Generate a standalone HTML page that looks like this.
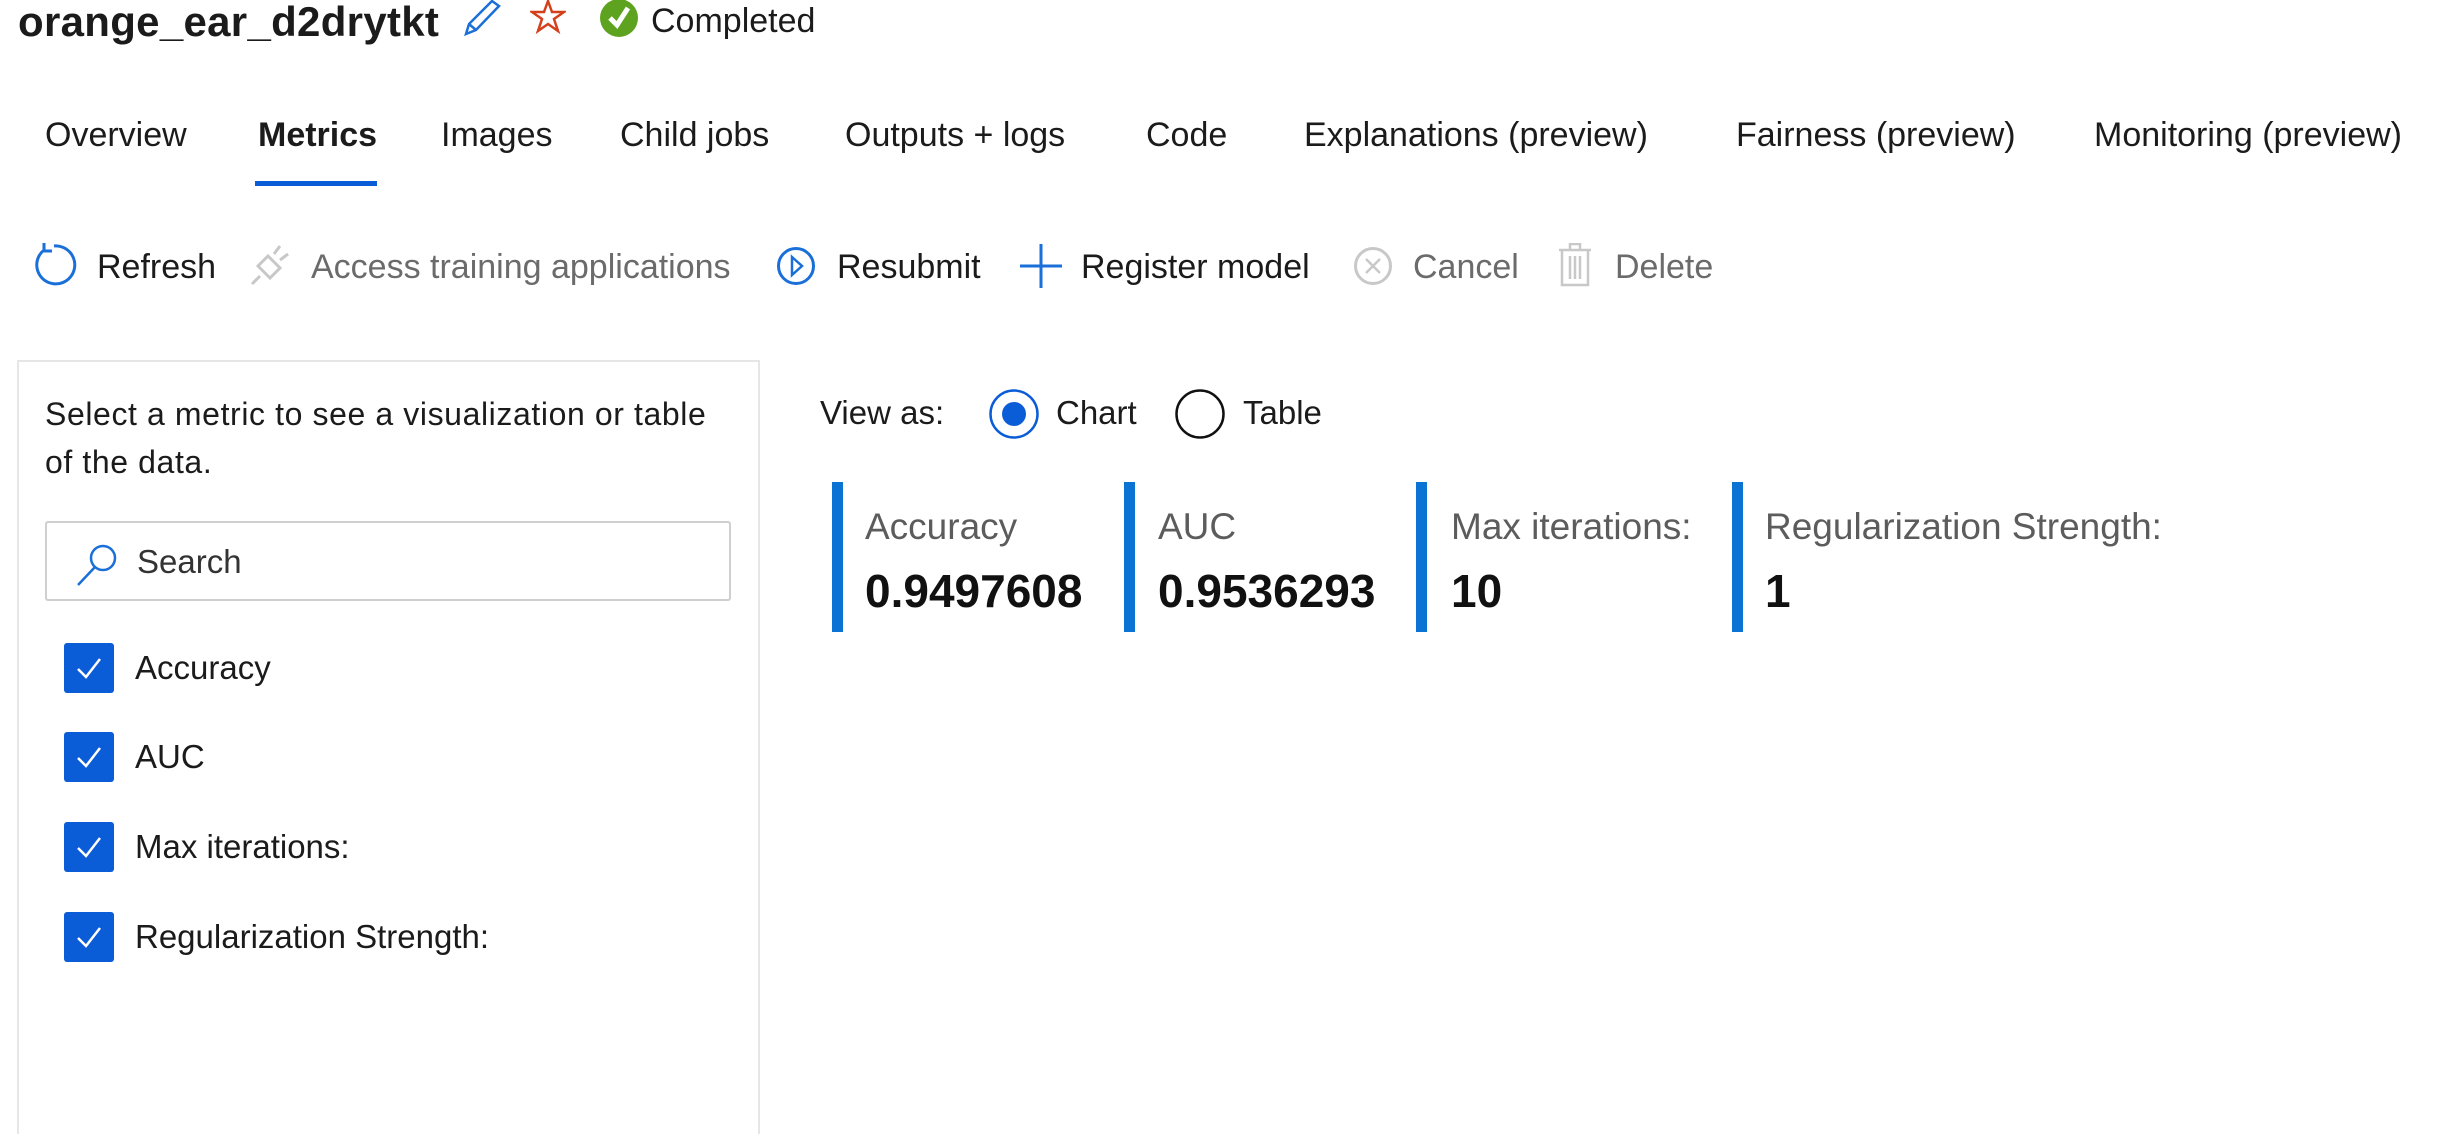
<!DOCTYPE html>
<html style="overflow:hidden"><head><meta charset="utf-8"><style>
*{margin:0;padding:0;box-sizing:border-box}
html,body{width:2454px;height:1134px;overflow:hidden;background:#fff}
#w{position:relative;width:2454px;height:1134px;overflow:hidden;font-family:"Liberation Sans",sans-serif;color:#1b1b1b}
.a{position:absolute;white-space:nowrap}
.t{font-size:34px;height:50px;line-height:50px}
.g{color:#6b6b6b}
.cb{position:absolute;left:64px;width:50px;height:50px;background:#0b5cd7;border-radius:3px}
.cl{position:absolute;left:135px;font-size:33px;height:50px;line-height:50px}
.bar{position:absolute;top:482px;width:11px;height:150px;background:#0a73d4}
.ml{position:absolute;top:505px;font-size:37px;color:#5c5c5c;line-height:44px}
.mv{position:absolute;top:565px;font-size:46px;font-weight:bold;color:#111;line-height:52px}
</style></head><body><div id="w">
<div class="a" style="left:18px;top:-3px;font-size:42px;font-weight:bold;line-height:50px;letter-spacing:0.3px">orange_ear_d2drytkt</div>
<svg class="a" style="left:460px;top:0" width="44" height="36" viewBox="0 0 44 36"><path d="M6 34 L9 24 L32 1 L39 6 L16 30 Z M9 24 L16 30" fill="none" stroke="#1a6fd8" stroke-width="2.5"/></svg>
<svg class="a" style="left:530px;top:0" width="36" height="34" viewBox="0 0 36 34"><path d="M18 1 L22 12 L34 12 L24 19 L28 31 L18 24 L8 31 L12 19 L2 12 L14 12 Z" fill="none" stroke="#d4401c" stroke-width="2.5"/></svg>
<svg class="a" style="left:599px;top:0" width="40" height="38" viewBox="0 0 40 38"><circle cx="20" cy="18" r="19" fill="#5ea320"/><path d="M11 18 L18 25 L29 8" fill="none" stroke="#fff" stroke-width="5"/></svg>
<div class="a" style="left:651px;top:-4px;font-size:34px;line-height:50px">Completed</div>

<div class="a t" style="left:45px;top:110px">Overview</div>
<div class="a t" style="left:258px;top:110px;font-weight:bold">Metrics</div>
<div class="a t" style="left:441px;top:110px">Images</div>
<div class="a t" style="left:620px;top:110px">Child jobs</div>
<div class="a t" style="left:845px;top:110px">Outputs + logs</div>
<div class="a t" style="left:1146px;top:110px">Code</div>
<div class="a t" style="left:1304px;top:110px">Explanations (preview)</div>
<div class="a t" style="left:1736px;top:110px">Fairness (preview)</div>
<div class="a t" style="left:2094px;top:110px">Monitoring (preview)</div>
<div class="a" style="left:255px;top:181px;width:122px;height:5px;background:#0b5cd7"></div>

<svg class="a" style="left:34px;top:242px" width="44" height="46" viewBox="0 0 44 46"><path d="M10 8 A19 19 0 1 0 20 4" fill="none" stroke="#1a6fd8" stroke-width="3"/><path d="M10 1 L10 9 L18 9" fill="none" stroke="#1a6fd8" stroke-width="3"/></svg>
<div class="a t" style="left:97px;top:242px">Refresh</div>
<svg class="a" style="left:250px;top:244px" width="40" height="42" viewBox="0 0 40 42"><path d="M2 40 L10 32 M30 2 L24 10 M38 10 L30 16 M8 22 L20 34 L30 24 L18 12 Z" fill="none" stroke="#c8c8c8" stroke-width="3"/></svg>
<div class="a t g" style="left:311px;top:242px">Access training applications</div>
<svg class="a" style="left:776px;top:246px" width="40" height="40" viewBox="0 0 40 40"><circle cx="20" cy="20" r="17.5" fill="none" stroke="#1a6fd8" stroke-width="3"/><path d="M16 11 L26 20 L16 29 Z" fill="none" stroke="#1a6fd8" stroke-width="2.5"/></svg>
<div class="a t" style="left:837px;top:242px">Resubmit</div>
<svg class="a" style="left:1020px;top:244px" width="42" height="44" viewBox="0 0 42 44"><path d="M21 0 V44 M0 22 H42" stroke="#1a6fd8" stroke-width="3"/></svg>
<div class="a t" style="left:1081px;top:242px">Register model</div>
<svg class="a" style="left:1353px;top:246px" width="40" height="40" viewBox="0 0 40 40"><circle cx="20" cy="20" r="17.5" fill="none" stroke="#c8c8c8" stroke-width="3"/><path d="M13 13 L27 27 M27 13 L13 27" stroke="#c8c8c8" stroke-width="2.5"/></svg>
<div class="a t g" style="left:1413px;top:242px">Cancel</div>
<svg class="a" style="left:1558px;top:243px" width="34" height="44" viewBox="0 0 34 44"><path d="M1 7 H33 M12 7 V1 H22 V7 M4 7 V42 H30 V7 M12 13 V36 M17 13 V36 M22 13 V36" fill="none" stroke="#c8c8c8" stroke-width="2.5"/></svg>
<div class="a t g" style="left:1615px;top:242px">Delete</div>

<div class="a" style="left:17px;top:360px;width:743px;height:774px;border:2px solid #e6e6e6;border-bottom:none"></div>
<div class="a" style="left:45px;top:390px;font-size:32px;line-height:48px;letter-spacing:0.6px">Select a metric to see a visualization or table<br>of the data.</div>
<div class="a" style="left:45px;top:521px;width:686px;height:80px;border:2px solid #cfcfcf;border-radius:3px"></div>
<svg class="a" style="left:75px;top:541px" width="46" height="46" viewBox="0 0 46 46"><circle cx="28" cy="17" r="12" fill="none" stroke="#1a6fd8" stroke-width="2.5"/><path d="M20 26 L3 44" stroke="#1a6fd8" stroke-width="2.5"/></svg>
<div class="a" style="left:137px;top:537px;font-size:33px;line-height:50px;color:#333">Search</div>

<div class="cb" style="top:643px"></div><svg class="a" style="left:64px;top:643px" width="50" height="50"><path d="M14 26 L22 34 L36 16" fill="none" stroke="#fff" stroke-width="2.5"/></svg><div class="cl" style="top:643px">Accuracy</div>
<div class="cb" style="top:732px"></div><svg class="a" style="left:64px;top:732px" width="50" height="50"><path d="M14 26 L22 34 L36 16" fill="none" stroke="#fff" stroke-width="2.5"/></svg><div class="cl" style="top:732px">AUC</div>
<div class="cb" style="top:822px"></div><svg class="a" style="left:64px;top:822px" width="50" height="50"><path d="M14 26 L22 34 L36 16" fill="none" stroke="#fff" stroke-width="2.5"/></svg><div class="cl" style="top:822px">Max iterations:</div>
<div class="cb" style="top:912px"></div><svg class="a" style="left:64px;top:912px" width="50" height="50"><path d="M14 26 L22 34 L36 16" fill="none" stroke="#fff" stroke-width="2.5"/></svg><div class="cl" style="top:912px">Regularization Strength:</div>

<div class="a" style="left:820px;top:388px;font-size:33px;line-height:50px">View as:</div>
<svg class="a" style="left:988px;top:388px" width="52" height="52"><circle cx="26" cy="26" r="23.5" fill="none" stroke="#0b5cd7" stroke-width="2.5"/><circle cx="26" cy="26" r="12" fill="#0b5cd7"/></svg>
<div class="a" style="left:1056px;top:388px;font-size:33px;line-height:50px">Chart</div>
<svg class="a" style="left:1174px;top:388px" width="52" height="52"><circle cx="26" cy="26" r="23.5" fill="none" stroke="#111" stroke-width="2.5"/></svg>
<div class="a" style="left:1243px;top:388px;font-size:33px;line-height:50px">Table</div>

<div class="bar" style="left:832px"></div><div class="ml" style="left:865px">Accuracy</div><div class="mv" style="left:865px">0.9497608</div>
<div class="bar" style="left:1124px"></div><div class="ml" style="left:1158px">AUC</div><div class="mv" style="left:1158px">0.9536293</div>
<div class="bar" style="left:1416px"></div><div class="ml" style="left:1451px">Max iterations:</div><div class="mv" style="left:1451px">10</div>
<div class="bar" style="left:1732px"></div><div class="ml" style="left:1765px">Regularization Strength:</div><div class="mv" style="left:1765px">1</div>
</div></body></html>
